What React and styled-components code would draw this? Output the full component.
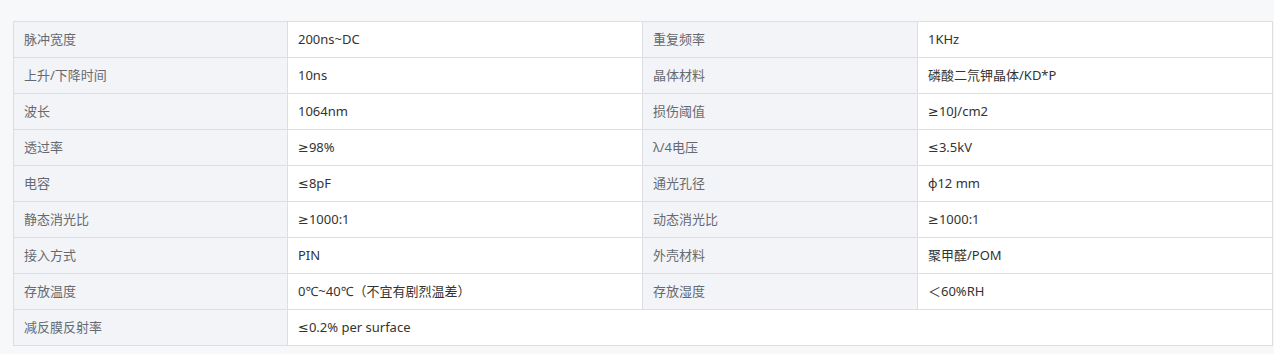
import React from "react";
import styled, { createGlobalStyle } from "styled-components";

const GlobalStyle = createGlobalStyle`
    html, body {
        margin: 0;
        padding: 0;
        background: #f7f8fa;
    }
    body {
        font-family: "Noto Sans", "DejaVu Sans", "Noto Sans CJK SC", sans-serif;
        font-size: 13px;
    }
`;

const specs = [
    ["脉冲宽度", "200ns~DC", "重复频率", "1KHz"],
    ["上升/下降时间", "10ns", "晶体材料", "磷酸二氘钾晶体/KD*P"],
    ["波长", "1064nm", "损伤阈值", "≥10J/cm2"],
    ["透过率", "≥98%", "λ/4电压", "≤3.5kV"],
    ["电容", "≤8pF", "通光孔径", "φ12 mm"],
    ["静态消光比", "≥1000:1", "动态消光比", "≥1000:1"],
    ["接入方式", "PIN", "外壳材料", "聚甲醛/POM"],
    ["存放温度", "0℃~40℃（不宜有剧烈温差）", "存放湿度", "＜60%RH"],
    ["减反膜反射率", "≤0.2% per surface"],
];

const App = () => {
    return (
        <Page>
            <GlobalStyle />
            <SpecTable>
                <colgroup>
                    <Col $w={274} />
                    <Col $w={355} />
                    <Col $w={275} />
                    <Col $w={355} />
                </colgroup>
                <tbody>
                    {specs.map((row, i) => (
                        <tr key={i}>
                            <Label>{row[0]}</Label>
                            {row.length === 2 ? (
                                <Value colSpan={3}>{row[1]}</Value>
                            ) : (
                                <>
                                    <Value>{row[1]}</Value>
                                    <Label>{row[2]}</Label>
                                    <Value>{row[3]}</Value>
                                </>
                            )}
                        </tr>
                    ))}
                </tbody>
            </SpecTable>
        </Page>
    );
};

export default App;

const Page = styled.div`
    padding: 21px 0 7px 13px;
    min-height: 354px;
    box-sizing: border-box;
`;

const SpecTable = styled.table`
    width: 1260px;
    table-layout: fixed;
    border-collapse: collapse;
    background: #fff;
`;

const Col = styled.col`
    width: ${(p) => p.$w}px;
`;

const Cell = styled.td`
    height: 36px;
    padding: 0 10px;
    border: 1px solid #dcdee2;
    vertical-align: middle;
    line-height: 1.2;
    white-space: nowrap;
    box-sizing: border-box;
`;

const Label = styled(Cell)`
    background: #f3f4f7;
    color: #666a70;
`;

const Value = styled(Cell)`
    background: #fff;
    color: #333;
`;
